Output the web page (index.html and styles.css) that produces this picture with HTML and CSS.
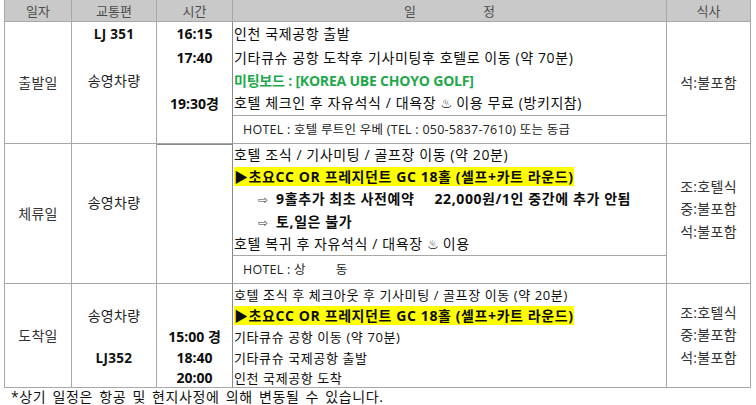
FILE: index.html
```html
<!DOCTYPE html>
<html lang="ko">
<head>
<meta charset="utf-8">
<link rel="stylesheet" href="styles.css">
</head>
<body>
<div class="page">
<table class="sched">
  <thead>
    <tr class="hd">
      <th class="c1">일자</th>
      <th class="c2">교통편</th>
      <th class="c3">시간</th>
      <th class="c4"><span class="sp">일</span><span>정</span></th>
      <th class="c5">식사</th>
    </tr>
  </thead>
  <tbody>
    <tr class="l24">
      <td class="day end" rowspan="5">출발일</td>
      <td class="tr b">LJ 351</td>
      <td class="tm b">16:15</td>
      <td class="it">인천 국제공항 출발</td>
      <td class="meal end" rowspan="5">석:불포함</td>
    </tr>
    <tr class="l23">
      <td class="tr"></td>
      <td class="tm b">17:40</td>
      <td class="it">기타큐슈 공항 도착후 기사미팅후 호텔로 이동 (약 70분)</td>
    </tr>
    <tr class="l23">
      <td class="tr">송영차량</td>
      <td class="tm"></td>
      <td class="it green">미팅보드 : [KOREA UBE CHOYO GOLF]</td>
    </tr>
    <tr class="l23">
      <td class="tr"></td>
      <td class="tm b">19:30경</td>
      <td class="it">호텔 체크인 후 자유석식 / 대욕장 <span class="onsen">♨</span> 이용 무료 (방키지참)</td>
    </tr>
    <tr class="hotel">
      <td class="tr end"></td>
      <td class="tm end"></td>
      <td class="it htl end">HOTEL : 호텔 루트인 우베 (TEL : 050-5837-7610) 또는 동급</td>
    </tr>

    <tr class="l22">
      <td class="day end" rowspan="6">체류일</td>
      <td class="tr end shift" rowspan="6">송영차량</td>
      <td class="tm dark end" rowspan="6"></td>
      <td class="it">호텔 조식 / 기사미팅 / 골프장 이동 (약 20분)</td>
      <td class="meal end" rowspan="6"><div class="mlist"><div>조:호텔식</div><div>중:불포함</div><div>석:불포함</div></div></td>
    </tr>
    <tr class="l22">
      <td class="it b"><span class="hl">▶초요CC OR 프레지던트 GC 18홀 (셀프+카트 라운드)</span></td>
    </tr>
    <tr class="l23">
      <td class="it b ind"><span class="arr">⇨</span>9홀추가 최초 사전예약<span class="wide"></span>22,000원/1인 중간에 추가 안됨</td>
    </tr>
    <tr class="l22">
      <td class="it b ind"><span class="arr">⇨</span>토,일은 불가</td>
    </tr>
    <tr class="l22">
      <td class="it">호텔 복귀 후 자유석식 / 대욕장 <span class="onsen">♨</span> 이용</td>
    </tr>
    <tr class="hotel">
      <td class="it htl end">HOTEL : 상<span class="gap"></span>동</td>
    </tr>

    <tr class="l21">
      <td class="day end" rowspan="5">도착일</td>
      <td class="tr"></td>
      <td class="tm"></td>
      <td class="it sm">호텔 조식 후 체크아웃 후 기사미팅 / 골프장 이동 (약 20분)</td>
      <td class="meal end" rowspan="5"><div class="mlist m3"><div>조:호텔식</div><div>중:불포함</div><div>석:불포함</div></div></td>
    </tr>
    <tr class="l21">
      <td class="tr">송영차량</td>
      <td class="tm"></td>
      <td class="it b"><span class="hl">▶초요CC OR 프레지던트 GC 18홀 (셀프+카트 라운드)</span></td>
    </tr>
    <tr class="l21">
      <td class="tr"></td>
      <td class="tm b">15:00 경</td>
      <td class="it sm">기타큐슈 공항 이동 (약 70분)</td>
    </tr>
    <tr class="l21">
      <td class="tr b">LJ352</td>
      <td class="tm b">18:40</td>
      <td class="it sm">기타큐슈 국제공항 출발</td>
    </tr>
    <tr class="l20">
      <td class="tr end"></td>
      <td class="tm b end">20:00</td>
      <td class="it sm end">인천 국제공항 도착</td>
    </tr>
  </tbody>
</table>
<p class="note">*상기 일정은 항공 및 현지사정에 의해 변동될 수 있습니다.</p>
</div>
</body>
</html>
```

FILE: styles.css
```css
* { box-sizing: border-box; }

body {
  margin: 0;
  background: #ffffff;
  font-family: "Open Sans", "Noto Sans CJK KR", sans-serif;
  font-size: 14px;
  color: #0d0d0d;
}

.page {
  padding-left: 4px;
}

.sched {
  border-collapse: separate;
  border-spacing: 0;
  table-layout: fixed;
  width: 747px;
  border-left: 1px solid #a8a8a8;
  font-size: 14px;
}

th,
td {
  padding: 0;
  border-right: 1px solid #a8a8a8;
  line-height: 18px;
  white-space: nowrap;
}

th {
  height: 22px;
  background: #c9c9c9;
  color: #4d4d4d;
  font-weight: normal;
  font-size: 13px;
  border-bottom: 1px solid #a8a8a8;
  text-align: center;
}

.c1 { width: 67px; }
.c2 { width: 85px; }
.c3 { width: 76px; }
.c4 { width: 434px; }
.c5 { width: 84px; }

.sp { margin-right: 67px; }

.l24 { height: 24px; }
.l23 { height: 23px; }
.l22 { height: 22px; }
.l21 { height: 21px; }
.l20 { height: 20px; }
.hotel { height: 29px; }

.end { border-bottom: 1px solid #a8a8a8; }

.day {
  text-align: center;
  color: #333333;
  letter-spacing: 0.3px;
}

.tr {
  text-align: center;
  color: #222222;
  letter-spacing: 0.3px;
}

.tr.b {
  font-size: 13.5px;
  color: #111111;
}

.tm {
  text-align: center;
  border-right-color: #8a8a8a;
}

.dark {
  border-top: 1px solid #8a8a8a;
}

.it {
  padding-left: 1px;
  text-align: left;
  letter-spacing: 0.6px;
}

.b { font-weight: bold; }

.green {
  color: #1ea84c;
  font-weight: bold;
  letter-spacing: -0.2px;
}

.hl {
  background: #ffff00;
}

.ind {
  padding-left: 25px;
}

.arr {
  font-weight: normal;
  font-family: "DejaVu Sans", sans-serif;
  font-size: 12px;
  color: #444444;
  margin-right: 8px;
  letter-spacing: 0;
}

.wide {
  display: inline-block;
  width: 20px;
}

.onsen {
  font-family: "DejaVu Sans", sans-serif;
  font-size: 13px;
  letter-spacing: 0;
}

.htl {
  border-top: 1px solid #a8a8a8;
  padding-left: 10px;
  font-size: 12.5px;
  letter-spacing: 0.25px;
  color: #222222;
}

.gap {
  display: inline-block;
  width: 30px;
}

.sm {
  font-size: 13px;
}

.shift {
  padding-bottom: 22px;
}

.meal {
  text-align: center;
  color: #333333;
  letter-spacing: 0.3px;
}

.mlist {
  line-height: 22.5px;
  padding-bottom: 8px;
}

.m3 {
  padding-bottom: 0;
}

.note {
  margin: 0;
  padding-left: 7px;
  line-height: 18px;
  font-size: 14px;
  letter-spacing: 0.6px;
  word-spacing: 2px;
  color: #111111;
}
```
